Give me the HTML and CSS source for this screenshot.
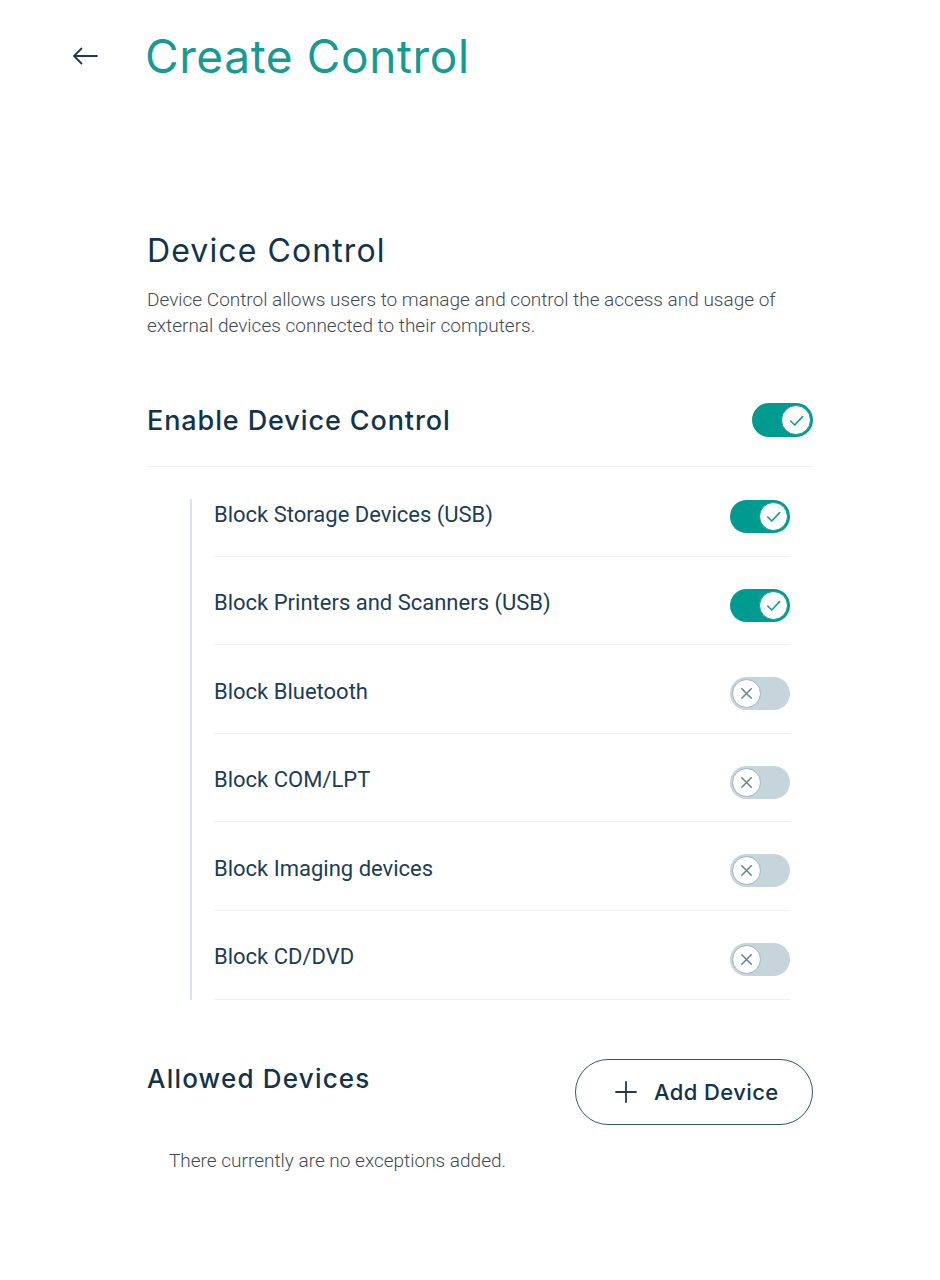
FILE: index.html
```html
<!DOCTYPE html>
<html lang="en">
<head>
    <meta charset="UTF-8">
    <meta name="viewport" content="width=device-width, initial-scale=1.0">
    <title>Create Control</title>
    <link rel="stylesheet" href="styles.css">
</head>
<body>
    <header class="page-header">
        <button class="back" aria-label="Back">
            <svg width="26" height="18" viewBox="0 0 26 18" fill="none" stroke="#1d3a52" stroke-width="1.8" stroke-linecap="round" stroke-linejoin="round">
                <path d="M25 9H2M9.5 1.5L2 9l7.5 7.5"/>
            </svg>
        </button>
        <h1>Create Control</h1>
    </header>

    <main class="content">
        <section class="intro">
            <h2>Device Control</h2>
            <p>Device Control allows users to manage and control the access and usage of external devices connected to their computers.</p>
        </section>

        <div class="main-setting">
            <h3>Enable Device Control</h3>
            <span class="toggle on large"><span class="knob"><svg viewBox="0 0 20 20"><path d="M4.5 10.5l3.8 3.8 7.5-8"/></svg></span></span>
        </div>

        <ul class="sub-settings">
            <li>
                <span class="label">Block Storage Devices (USB)</span>
                <span class="toggle on"><span class="knob"><svg viewBox="0 0 20 20"><path d="M4.5 10.5l3.8 3.8 7.5-8"/></svg></span></span>
            </li>
            <li>
                <span class="label">Block Printers and Scanners (USB)</span>
                <span class="toggle on"><span class="knob"><svg viewBox="0 0 20 20"><path d="M4.5 10.5l3.8 3.8 7.5-8"/></svg></span></span>
            </li>
            <li>
                <span class="label">Block Bluetooth</span>
                <span class="toggle"><span class="knob"><svg viewBox="0 0 20 20"><path d="M5 5l10 10M15 5L5 15"/></svg></span></span>
            </li>
            <li>
                <span class="label">Block COM/LPT</span>
                <span class="toggle"><span class="knob"><svg viewBox="0 0 20 20"><path d="M5 5l10 10M15 5L5 15"/></svg></span></span>
            </li>
            <li>
                <span class="label">Block Imaging devices</span>
                <span class="toggle"><span class="knob"><svg viewBox="0 0 20 20"><path d="M5 5l10 10M15 5L5 15"/></svg></span></span>
            </li>
            <li>
                <span class="label">Block CD/DVD</span>
                <span class="toggle"><span class="knob"><svg viewBox="0 0 20 20"><path d="M5 5l10 10M15 5L5 15"/></svg></span></span>
            </li>
        </ul>

        <section class="allowed">
            <div class="allowed-head">
                <h3>Allowed Devices</h3>
                <button class="add-device">
                    <svg width="22" height="22" viewBox="0 0 22 22" fill="none" stroke="#1d3a52" stroke-width="1.8" stroke-linecap="round">
                        <path d="M11 1v20M1 11h20"/>
                    </svg>
                    Add Device
                </button>
            </div>
            <p class="empty">There currently are no exceptions added.</p>
        </section>
    </main>
</body>
</html>
```

FILE: styles.css
```css
body {
    margin: 0;
    font-family: 'Roboto', 'Liberation Sans', sans-serif;
    background: #fff;
    color: #1d3a52;
}
.page-header {
    display: flex;
    align-items: center;
    padding: 28px 0 0 72px;
}
.back {
    background: none;
    border: none;
    padding: 0;
    margin-right: 47px;
    display: flex;
    cursor: pointer;
}
.page-header h1 {
    margin: 0;
    font-family: 'Inter', sans-serif;
    font-weight: 400;
    font-size: 46px;
    line-height: 56px;
    color: #169b92;
    letter-spacing: 0.6px;
}
.content {
    margin: 0 0 0 147px;
    width: 666px;
}
.intro {
    padding-top: 148px;
}
.intro h2 {
    margin: 0;
    font-family: 'Inter', sans-serif;
    font-weight: 400;
    font-size: 32px;
    line-height: 38px;
    letter-spacing: 1.1px;
    color: #12334a;
}
.intro p {
    margin: 17px 0 0;
    font-weight: 300;
    font-size: 19px;
    line-height: 26px;
    color: #3f4a52;
}
.main-setting {
    display: flex;
    align-items: center;
    justify-content: space-between;
    margin-top: 64px;
    padding-bottom: 29px;
    border-bottom: 1px solid #eef1f3;
}
.main-setting h3,
.allowed-head h3 {
    margin: 0;
    font-family: 'Inter', sans-serif;
    font-weight: 500;
    font-size: 27px;
    letter-spacing: 0.9px;
    color: #12334a;
}
.toggle {
    position: relative;
    display: inline-block;
    width: 60px;
    height: 33px;
    border-radius: 17px;
    background: #c6d4dc;
    flex-shrink: 0;
}
.toggle.large {
    width: 61px;
    height: 34px;
}
.toggle .knob {
    position: absolute;
    top: 2px;
    left: 2px;
    width: 29px;
    height: 29px;
    border-radius: 50%;
    background: #fff;
    border: 1px solid #9fb3be;
    box-sizing: border-box;
    display: flex;
    align-items: center;
    justify-content: center;
}
.toggle.large .knob {
    width: 30px;
    height: 30px;
}
.toggle.on {
    background: #009b90;
}
.toggle.on .knob {
    left: auto;
    right: 2px;
    border: 1.5px solid #0a9a90;
}
.toggle svg {
    width: 19px;
    height: 19px;
    fill: none;
    stroke: #6b8594;
    stroke-width: 1.6;
    stroke-linecap: round;
    stroke-linejoin: round;
}
.toggle.on svg {
    stroke: #14a097;
    width: 21px;
    height: 21px;
}
.sub-settings {
    list-style: none;
    margin: 32px 23px 0 43px;
    padding: 0 0 0 22px;
    border-left: 2px solid #dbe4ea;
}
.sub-settings li {
    display: flex;
    align-items: center;
    justify-content: space-between;
    padding: 32px 0 22.6px;
    border-bottom: 1px solid #eef1f3;
}
.sub-settings li:first-child {
    padding-top: 1px;
}
.sub-settings .label {
    font-size: 22px;
    color: #1c3d55;
    padding-bottom: 5px;
}
.allowed {
    margin-top: 59px;
}
.allowed-head {
    display: flex;
    justify-content: space-between;
    align-items: flex-start;
}
.allowed-head h3 {
    font-size: 26px;
    letter-spacing: 1.2px;
    margin-top: 4px;
}
.add-device {
    display: flex;
    align-items: center;
    gap: 17px;
    width: 238px;
    height: 66px;
    padding: 0 0 0 39px;
    border: 1.5px solid #2e5a6f;
    border-radius: 33px;
    background: #fff;
    font-family: 'Inter', sans-serif;
    font-weight: 500;
    font-size: 22px;
    letter-spacing: 0.4px;
    color: #12334a;
    cursor: pointer;
}
.empty {
    margin: 24px 0 0 22px;
    font-weight: 300;
    font-size: 19px;
    color: #3f4a52;
}
```
